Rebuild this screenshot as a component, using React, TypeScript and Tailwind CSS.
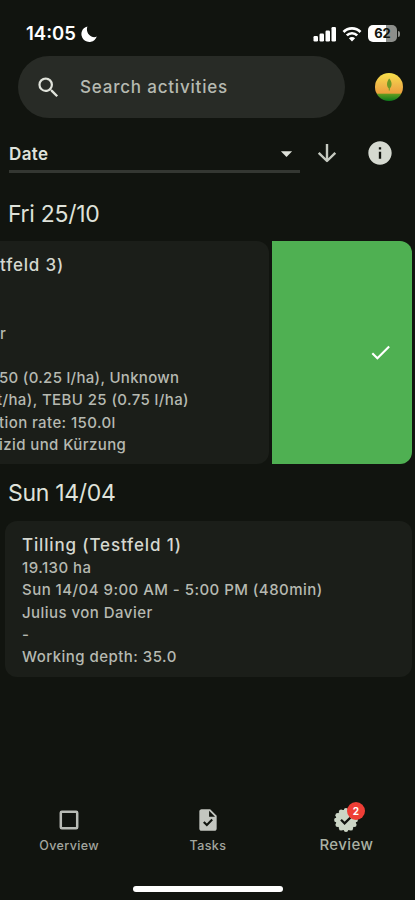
import React from 'react';
import { MdArrowDropDown, MdCheck, MdInfo, MdSearch, MdTask } from 'react-icons/md';

function StatusBar() {
  return (
    <div className="flex h-14 items-center justify-between pt-[11px] pr-[15px] pl-[26px] text-white">
      <div className="flex items-center gap-[5px]">
        <span className="text-[18.5px] font-semibold">14:05</span>
        <svg width="16" height="16" viewBox="0 0 16 16" fill="white">
          <path d="M6.4 0.4A7.9 7.9 0 1 0 15.8 10.6C10.6 13 4 7.4 6.4 0.4Z" />
        </svg>
      </div>
      <div className="flex items-center">
        <svg width="24" height="16" viewBox="0 0 24 16" fill="white">
          <rect x="0.5" y="10" width="4.5" height="5.5" rx="1.2" />
          <rect x="6.5" y="7.5" width="4.5" height="8" rx="1.2" />
          <rect x="12.5" y="4.5" width="4.5" height="11" rx="1.2" />
          <rect x="18.5" y="1" width="4.5" height="14.5" rx="1.2" />
        </svg>
        <svg className="ml-[5px]" width="20" height="16" viewBox="0 0 20 16" fill="none" stroke="white" strokeWidth="2.7">
          <path d="M1.5 6A12 12 0 0 1 18.5 6" />
          <path d="M4.8 9.4A7.4 7.4 0 0 1 15.2 9.4" />
          <path d="M10 15.6L6.9 12.3A4.4 4.4 0 0 1 13.1 12.3Z" fill="white" stroke="none" />
        </svg>
        <div className="ml-[6px] flex h-[17px] w-[29px] items-center justify-center rounded-[5px] bg-linear-to-r from-white from-62% to-[#8d8f8b] to-62% text-[13px] font-bold text-[#11140f]">
          62
        </div>
        <div className="ml-px h-[6px] w-[2px] rounded-r-full bg-[#8d8f8b]" />
      </div>
    </div>
  );
}

function Avatar() {
  return (
    <svg width="28" height="28" viewBox="0 0 28 28">
      <defs>
        <linearGradient id="sky" x1="0" y1="0" x2="0" y2="1">
          <stop offset="0" stopColor="#f7e04a" />
          <stop offset="0.45" stopColor="#efb648" />
          <stop offset="0.72" stopColor="#eda03c" />
          <stop offset="0.76" stopColor="#5f9a20" />
          <stop offset="1" stopColor="#0c7a1c" />
        </linearGradient>
      </defs>
      <circle cx="14" cy="14" r="14" fill="url(#sky)" />
      <path d="M14.2 5.5C17.4 9 17.2 13 14.8 15.5V17.5H13.8V15.5C11.4 13 11.4 9 14.2 5.5Z" fill="#6c9a25" />
    </svg>
  );
}

/** Scalloped seal with a check mark */
function ReviewIcon() {
  const bumps = Array.from({ length: 12 }, (_, i) => (i * Math.PI) / 6);
  return (
    <svg width="26" height="26" viewBox="0 0 26 26">
      <g fill="#ccd6c6">
        <circle cx="13" cy="13" r="10.4" />
        {bumps.map((a) => (
          <circle key={a} cx={13 + 9.7 * Math.cos(a)} cy={13 + 9.7 * Math.sin(a)} r="2.2" />
        ))}
      </g>
      <path d="M8 12.8L11.6 16.4L18 10" fill="none" stroke="#11140f" strokeWidth="2.3" />
    </svg>
  );
}

const activity = [
  '19.130 ha',
  'Sun 14/04 9:00 AM - 5:00 PM (480min)',
  'Julius von Davier',
  '-',
  'Working depth: 35.0',
];

export default function App() {
  return (
    <div className="flex h-[900px] w-[415px] flex-col overflow-hidden bg-[#11140f] font-['Inter',sans-serif] text-[#dfe2da]">
      <StatusBar />

      {/* Search */}
      <div className="flex items-center">
        <div className="ml-[18px] flex h-[62px] w-[327px] items-center rounded-full bg-[#282b26] pl-[17px]">
          <MdSearch className="size-[27px] text-[#e0e3db]" />
          <span className="ml-[18px] pt-[2px] text-[17px] font-medium tracking-[0.8px] text-[#b6bab1]">Search activities</span>
        </div>
        <div className="ml-[30px]">
          <Avatar />
        </div>
      </div>

      {/* Sorting */}
      <div className="mt-[18px] flex h-[37px] items-center pl-[9px]">
        <div className="flex h-[37px] w-[291px] items-center justify-between border-b-[3px] border-[#343732]">
          <span className="pt-[3px] text-[17px] font-semibold tracking-[0.4px]">Date</span>
          <MdArrowDropDown className="size-[27px]" />
        </div>
        <svg className="mb-[3px] ml-[17px] text-[#c5c9c0]" width="20" height="20" viewBox="0 0 20 20" fill="none" stroke="currentColor" strokeWidth="2.4" strokeLinejoin="round">
          <path d="M10 1V18M1.7 9.8L10 18L18.3 9.8" />
        </svg>
        <MdInfo className="mb-[3px] ml-[29px] size-[28px] text-[#d5d9d0]" />
      </div>

      <h2 className="mt-[25px] pl-[8px] text-[23px] leading-[32px] tracking-[-0.3px]">Fri 25/10</h2>

      {/* Card swiped to the left */}
      <div className="mt-[11px] flex h-[223px] gap-[3px]">
        <div className="flex w-[269px] flex-col overflow-hidden rounded-r-[12px] bg-[#1b1e19] pt-[12px] text-[15px] leading-[22.2px] font-medium tracking-[0.4px] whitespace-nowrap text-[#b6b9b1]">
          <p className="text-[17px] leading-[24px] tracking-[0.8px] text-[#d5d8d0]">tfeld 3)</p>
          <p className="mt-[46px]">r</p>
          <p className="mt-[22px] -ml-px tracking-[0.3px]">50 (0.25 l/ha), Unknown</p>
          <p className="-ml-[3px]">t/ha), TEBU 25 (0.75 l/ha)</p>
          <p className="-ml-px">tion rate: 150.0l</p>
          <p className="-ml-px">izid und Kürzung</p>
        </div>
        <div className="flex w-[140px] items-center justify-end rounded-r-[12px] bg-[#4fb052] pr-[19px]">
          <MdCheck className="size-[25px] text-white" />
        </div>
      </div>

      <h2 className="mt-[13px] pl-[8px] text-[23px] leading-[32px] tracking-[-0.3px]">Sun 14/04</h2>

      <div className="mt-[12px] ml-[5px] h-[156px] w-[407px] rounded-[12px] bg-[#1b1e19] pt-[12px] pl-[17px] text-[15px] leading-[22.3px] font-medium tracking-[0.46px] text-[#b6b9b1]">
        <p className="text-[17px] leading-[24px] tracking-[0.85px] text-[#d5d8d0]">Tilling (Testfeld 1)</p>
        {activity.map((line) => (
          <p key={line}>{line}</p>
        ))}
      </div>

      {/* Bottom navigation */}
      <nav className="mt-auto grid h-[79px] grid-cols-3 text-[#a3a69f]">
        <div className="flex flex-col items-center">
          <svg className="text-[#b9bcb6]" width="26" height="26" viewBox="0 0 26 26" fill="none" stroke="currentColor" strokeWidth="2.5">
            <rect x="4.8" y="4.8" width="16.4" height="16.4" rx="1" />
          </svg>
          <span className="mt-[4px] text-[12.5px] leading-[18px] font-medium tracking-[0.4px]">Overview</span>
        </div>
        <div className="flex flex-col items-center">
          <MdTask className="ml-px size-[26px] text-[#c3c6c0]" />
          <span className="mt-[4px] ml-px text-[12.5px] leading-[18px] font-medium tracking-[0.4px]">Tasks</span>
        </div>
        <div className="flex flex-col items-center">
          <div className="relative">
            <ReviewIcon />
            <span className="absolute -top-[5px] -right-[6px] flex size-[18px] items-center justify-center rounded-full bg-[#ee3e36] text-[10px] font-bold text-white">
              2
            </span>
          </div>
          <span className="mt-[3px] ml-px text-[15px] leading-[18px] font-medium tracking-[0.4px] text-[#a9b1a4]">Review</span>
        </div>
      </nav>
      <div className="mb-[8px] ml-[133px] h-[6px] w-[150px] rounded-full bg-white" />
    </div>
  );
}
